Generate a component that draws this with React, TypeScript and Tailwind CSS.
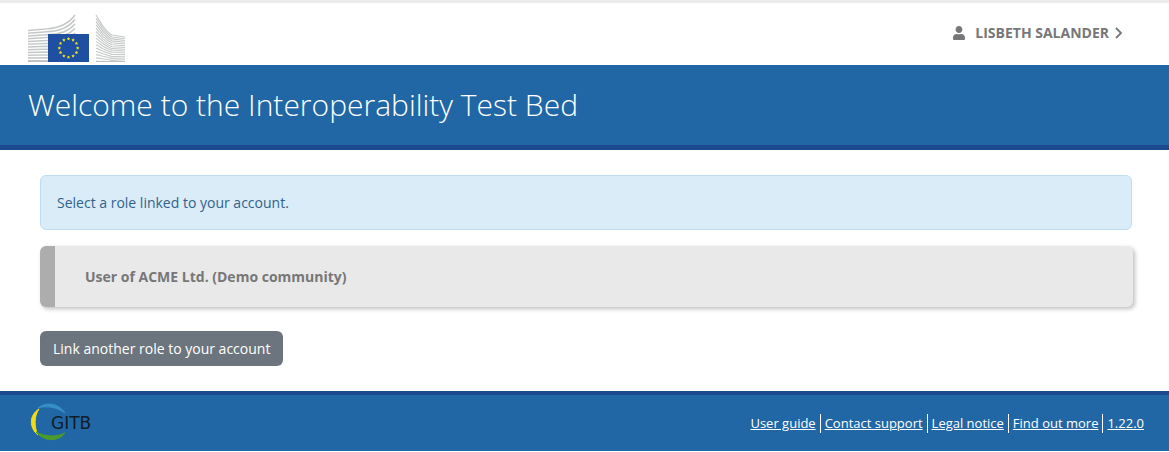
import { FaUser } from "react-icons/fa";

const links = ["User guide", "Contact support", "Legal notice", "Find out more", "1.22.0"];

// upper stripes sweep upwards next to the flag, lower ones run flat behind it
const leftStripes = Array.from({ length: 12 }, (_, i) => {
  const y = 16.5 + i * 2.75;
  const top = 1 + i * 4.5;
  return `M0 ${y} L19 ${y - 1.6 + i * 0.14} Q38 ${y - 3 + i * 0.8} 47 ${top}`;
});

const rightStripes = Array.from({ length: 15 }, (_, i) => {
  const y = 1 + i * 3.3;
  const mid = 20 + i * 1.95;
  return `M68 ${y} L75 ${y + (mid - y) * 0.6} Q80 ${mid - (mid - y) * 0.05} 84 ${mid + 1} L97 ${23 + i * 1.75}`;
});

const starPoints = (cx: number, cy: number) =>
  Array.from({ length: 10 }, (_, i) => {
    const r = i % 2 ? 0.9 : 1.8;
    const a = (i * Math.PI) / 5 - Math.PI / 2;
    return `${cx + r * Math.cos(a)},${cy + r * Math.sin(a)}`;
  }).join(" ");

function CommissionLogo() {
  return (
    <svg width="97" height="48" viewBox="0 0 97 48" role="img" aria-label="European Commission">
      <defs>
        <linearGradient id="stripes" gradientUnits="userSpaceOnUse" x1="0" y1="0" x2="0" y2="48">
          <stop offset="0" stopColor="#c4c6c6" />
          <stop offset="1" stopColor="#c6c8c8" />
        </linearGradient>
      </defs>
      <g fill="none" stroke="url(#stripes)" strokeWidth="1.4">
        {leftStripes.map((d) => <path key={d} d={d} />)}
      </g>
      <g fill="none" stroke="url(#stripes)" strokeWidth="1.1">
        {rightStripes.map((d) => <path key={d} d={d} />)}
      </g>
      <path d="M0 47.5 H20 M68 47.5 H97" stroke="#bfc1c1" />
      <rect x="20" y="20" width="41" height="28" fill="#1f4fa0" />
      {Array.from({ length: 12 }, (_, i) => {
        const a = (i * Math.PI) / 6;
        return <polygon key={i} points={starPoints(40.5 + 9.2 * Math.sin(a), 34 - 9.2 * Math.cos(a))} fill="#f2e616" />;
      })}
    </svg>
  );
}

function GitbLogo() {
  return (
    <svg width="78" height="40" viewBox="0 0 78 40" role="img" aria-label="GITB">
      <path d="M8 5 C15 -1 28 -1 35 10 C28 5 18 2 8 5 Z" fill="#3590c8" stroke="#3590c8" strokeWidth="0.8" />
      <path d="M9 6 C-1 12 -1 25 8 32 C4 24 4 13 9 6 Z" fill="#f5dc12" stroke="#f5dc12" strokeWidth="1" />
      <path d="M6 29 C13 38 27 40 35 30 C27 34 15 34 6 29 Z" fill="#4b9a2c" stroke="#4b9a2c" strokeWidth="1" />
      <text x="21" y="26" fill="#101c28" fontFamily="'DejaVu Sans', sans-serif" fontSize="17">GITB</text>
    </svg>
  );
}

export default function App() {
  return (
    <div className="bg-white font-['Open_Sans',sans-serif] text-sm text-[#777777]">
      <header className="flex items-center justify-between border-t-3 border-[#ececec] pt-[11px] pr-[46px] pb-[3px] pl-7">
        <CommissionLogo />
        <button type="button" className="mb-[10px] flex items-center font-bold">
          <FaUser className="mr-[10px] h-[14px] w-[12px]" preserveAspectRatio="none" aria-hidden="true" />
          LISBETH SALANDER
          <svg className="ml-[6px]" width="8" height="12" viewBox="0 0 8 12" fill="none" stroke="currentColor" strokeWidth="1.8" aria-hidden="true">
            <path d="M1 1 L6 6 L1 11" />
          </svg>
        </button>
      </header>

      <div className="border-b-5 border-[#1d4a8f] bg-[#2167a5] px-7 py-5 text-white">
        <h1 className="text-[30px] leading-10 font-light">Welcome to the Interoperability Test Bed</h1>
      </div>

      <main className="py-[25px] pr-9 pl-10">
        <div className="mr-px rounded-md border border-[#bcdff1] bg-[#daecf8] p-4 leading-[21px] text-[#31628c]">
          Select a role linked to your account.
        </div>
        <button
          type="button"
          className="mt-4 block w-full rounded-md border-l-15 border-[#adadad] bg-[#e9e9e9] px-[30px] py-5 text-left leading-[21px] font-bold shadow-[2px_2px_4px_rgba(0,0,0,0.25)]"
        >
          User of ACME Ltd. (Demo community)
        </button>
        <button type="button" className="mt-6 block rounded-md bg-[#6c757d] px-[13px] py-[7px] leading-[21px] text-white">
          Link another role to your account
        </button>
      </main>

      <footer className="flex items-center justify-between border-t-4 border-[#1d4a8f] bg-[#2167a5] py-2 pr-[21px] pl-[30px] text-[13px] leading-[19px] text-white">
        <GitbLogo />
        <nav className="flex divide-x divide-white">
          {links.map((label) => (
            <a key={label} href="#" className="px-1 underline">{label}</a>
          ))}
        </nav>
      </footer>
    </div>
  );
}
